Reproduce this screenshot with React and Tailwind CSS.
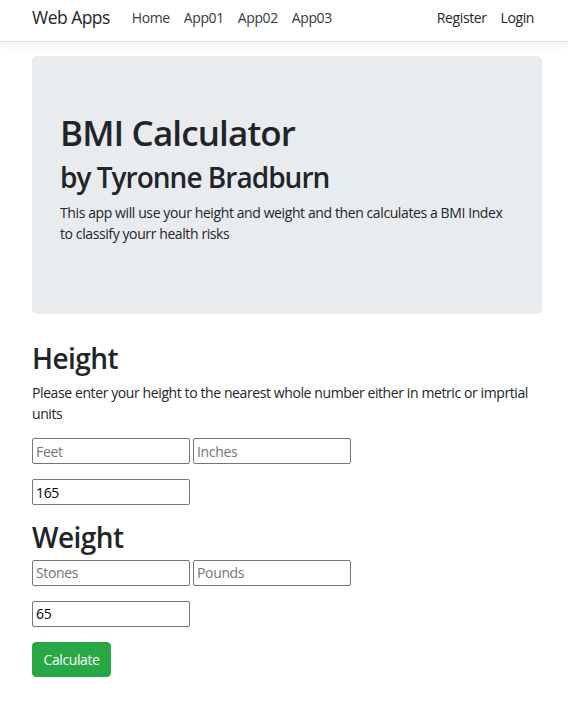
import { useState } from "react";

const font = { fontFamily: '"Open Sans", "Noto Sans", Arial, sans-serif' };

function NavBar() {
  const links = ["Home", "App01", "App02", "App03"];
  return (
    <nav className="h-[42px] bg-white border-b border-[#dee2e6] shadow-[0_4px_8px_rgba(0,0,0,0.05)] flex items-center pl-[32px] pr-[27px] pb-[6px]">
      <span className="text-[17.5px] tracking-[-0.03em] text-[#212529] mr-[15px]">Web Apps</span>
      <div className="flex items-center">
        {links.map((l) => (
          <a key={l} className="px-[7px] text-[14px] text-[#343a40]">{l}</a>
        ))}
      </div>
      <div className="ml-auto flex items-center">
        <a className="px-[7px] text-[14px] text-[#212529]">Register</a>
        <a className="px-[7px] text-[14px] text-[#212529]">Login</a>
      </div>
    </nav>
  );
}

function Field({ placeholder, value, onChange }) {
  return (
    <input
      type="text"
      placeholder={placeholder}
      value={value}
      onChange={onChange}
      className="w-[158px] h-[26px] border border-[#767676] rounded-[2px] px-[3px] text-[14px] tracking-[-0.025em] text-black placeholder:text-[#757575] bg-white outline-none"
      style={font}
    />
  );
}

export default function App() {
  const [feet, setFeet] = useState("");
  const [inches, setInches] = useState("");
  const [cm, setCm] = useState("165");
  const [stones, setStones] = useState("");
  const [pounds, setPounds] = useState("");
  const [kg, setKg] = useState("65");

  return (
    <div className="min-h-[718px] bg-white text-[#212529] tracking-[-0.025em]" style={font}>
      <NavBar />
      <main className="w-[510px] ml-[32px] pt-[14px]">
        <div className="bg-[#e9ecef] rounded-[5px] px-[28px] py-[56px] mb-[28px]">
          <h1 className="text-[35px] leading-[1.2] font-semibold tracking-[-0.025em] mb-[7px]">BMI Calculator</h1>
          <h2 className="text-[28px] leading-[1.2] font-semibold tracking-[-0.035em] mb-[7px]">by Tyronne Bradburn</h2>
          <p className="text-[14px] leading-[1.5] mb-[14px]">
            This app will use your height and weight and then calculates a BMI Index to classify yourr health risks
          </p>
        </div>

        <h2 className="text-[28px] leading-[1.2] font-semibold tracking-[-0.02em] mb-[7px]">Height</h2>
        <p className="text-[14px] leading-[1.5] mb-[14px]">
          Please enter your height to the nearest whole number either in metric or imprtial units
        </p>
        <div className="flex gap-[3px] mb-[15px]">
          <Field placeholder="Feet" value={feet} onChange={(e) => setFeet(e.target.value)} />
          <Field placeholder="Inches" value={inches} onChange={(e) => setInches(e.target.value)} />
        </div>
        <div className="mb-[16px]">
          <Field value={cm} onChange={(e) => setCm(e.target.value)} />
        </div>

        <h2 className="text-[28px] leading-[1.2] font-semibold tracking-[-0.02em] mb-[5px]">Weight</h2>
        <div className="flex gap-[3px] mb-[15px]">
          <Field placeholder="Stones" value={stones} onChange={(e) => setStones(e.target.value)} />
          <Field placeholder="Pounds" value={pounds} onChange={(e) => setPounds(e.target.value)} />
        </div>
        <div className="mb-[15px]">
          <Field value={kg} onChange={(e) => setKg(e.target.value)} />
        </div>
        <button className="bg-[#28a745] text-white text-[14px] leading-[1.5] px-[10.5px] py-[6px] rounded-[4px] border border-[#28a745]">
          Calculate
        </button>
      </main>
    </div>
  );
}
